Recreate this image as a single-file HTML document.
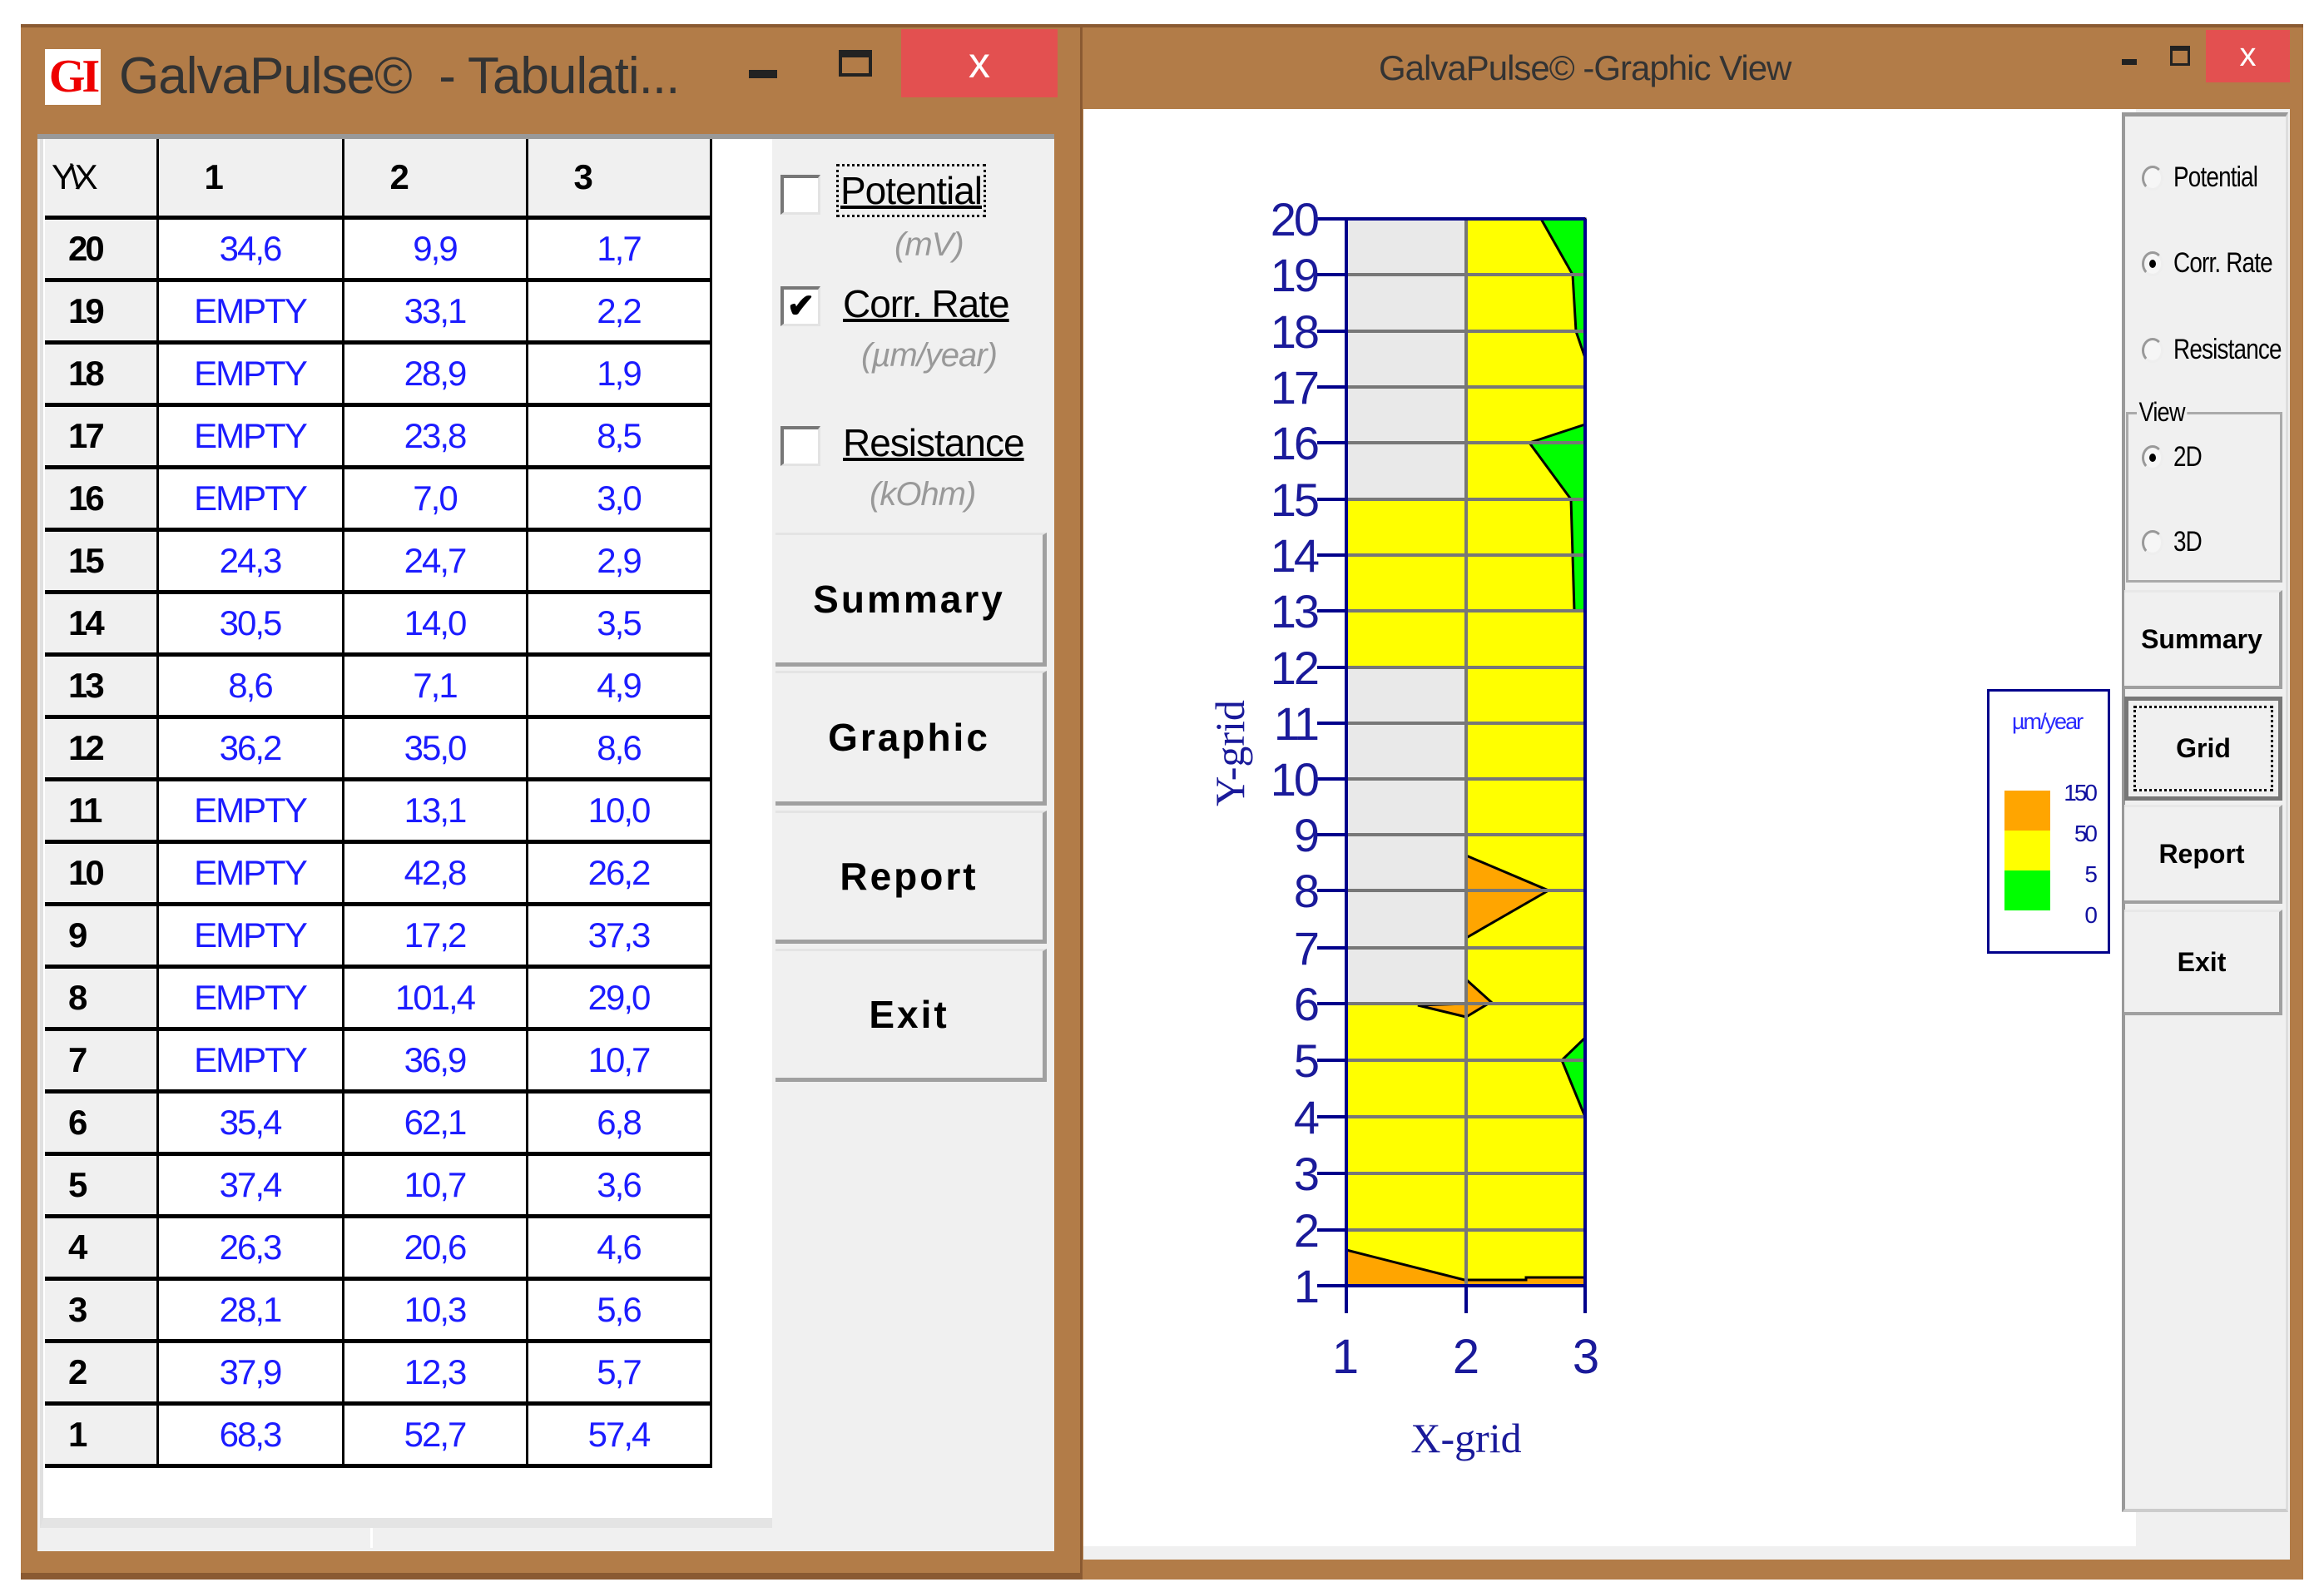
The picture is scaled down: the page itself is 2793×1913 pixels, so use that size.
<!DOCTYPE html>
<html><head><meta charset="utf-8"><style>
*{margin:0;padding:0;box-sizing:border-box}
body{width:2793px;height:1913px;background:#fff;position:relative;overflow:hidden;font-family:"Liberation Sans",sans-serif}
.a{position:absolute}
table{border-collapse:collapse;position:absolute;left:54px;top:167px;table-layout:fixed}
td{height:75px;border-bottom:5px solid #000;border-right:3px solid #000;text-align:center;color:#1c1cff;font-size:42px;letter-spacing:-2px;padding:0}
td.h{background:#f0f0f0;color:#000;text-align:left;padding-left:28px;font-weight:bold;letter-spacing:-3px}
tr.hd td{height:94px;background:#f0f0f0;color:#000;font-weight:bold;text-align:left;padding-left:55px}
tr.hd td:first-child{padding-left:8px;font-weight:normal;letter-spacing:-6px}
.btn{position:absolute;left:932px;width:326px;background:#f0f0f0;border-right:5px solid #a0a0a0;border-bottom:5px solid #a0a0a0;border-top:3px solid #e4e4e4;font-weight:bold;font-size:46px;letter-spacing:3px;display:flex;align-items:center;justify-content:center}
.rb{position:absolute;left:2553px;width:190px;background:#f0f0f0;border-right:4px solid #a0a0a0;border-bottom:4px solid #a0a0a0;border-top:3px solid #e8e8e8;font-weight:bold;font-size:32px;display:flex;align-items:center;justify-content:center;transform-origin:center}
.cb{position:absolute;left:938px;width:48px;height:48px;background:#fff;border-top:4px solid #777;border-left:4px solid #777;border-right:3px solid #e3e3e3;border-bottom:3px solid #e3e3e3}
.lab{position:absolute;font-size:46px;text-decoration:underline;text-decoration-thickness:4px;letter-spacing:-1px}
.unit{position:absolute;font-size:40px;font-style:italic;color:#999;letter-spacing:-1px}
.rad{position:absolute;left:2574px;width:26px;height:30px;border-radius:50%;border:3px solid #999;border-right-color:#eee;border-bottom-color:#eee;background:#f6f6f6}
.rad.on::after{content:"";position:absolute;left:6px;top:7px;width:8px;height:10px;border-radius:50%;background:#000}
.rt{position:absolute;left:2612px;font-size:34px;letter-spacing:-1px;transform:scaleX(0.82);transform-origin:left center;white-space:nowrap}
</style></head><body>

<!-- LEFT WINDOW -->
<div class="a" style="left:25px;top:29px;width:1273px;height:1869px;background:#b27c48;border-top:4px solid #8a5a32;border-bottom:8px solid #8a5a32"></div>
<div class="a" style="left:54px;top:59px;width:67px;height:67px;background:#fff;color:#e00;font-weight:bold;font-size:56px;line-height:67px;text-align:center;font-family:'Liberation Serif',serif;letter-spacing:-4px">GI</div>
<div class="a" style="left:143px;top:56px;font-size:62px;color:#333;letter-spacing:-1px;white-space:nowrap">GalvaPulse©&nbsp; - Tabulati...</div>
<div class="a" style="left:900px;top:84px;width:34px;height:10px;background:#222"></div>
<div class="a" style="left:1008px;top:60px;width:40px;height:32px;border:4px solid #222;border-top-width:9px"></div>
<div class="a" style="left:1083px;top:35px;width:188px;height:82px;background:#e35050;color:#fff;font-size:52px;text-align:center;line-height:82px">x</div>

<div class="a" style="left:45px;top:161px;width:1222px;height:1703px;background:#f0f0f0;border-top:6px solid #999"></div>
<div class="a" style="left:48px;top:167px;width:880px;height:1669px;background:#fff;border-left:4px solid #e0e0e0;border-bottom:12px solid #e4e4e4"></div>
<div class="a" style="left:48px;top:1836px;width:400px;height:24px;background:#f0f0f0;border-right:3px solid #fff"></div>

<table>
<colgroup><col style="width:135px"><col style="width:223px"><col style="width:221px"><col style="width:221px"></colgroup>
<tr class="hd"><td>Y\X</td><td>1</td><td>2</td><td>3</td></tr>
<tr><td class="h">20</td><td>34,6</td><td>9,9</td><td>1,7</td></tr>
<tr><td class="h">19</td><td>EMPTY</td><td>33,1</td><td>2,2</td></tr>
<tr><td class="h">18</td><td>EMPTY</td><td>28,9</td><td>1,9</td></tr>
<tr><td class="h">17</td><td>EMPTY</td><td>23,8</td><td>8,5</td></tr>
<tr><td class="h">16</td><td>EMPTY</td><td>7,0</td><td>3,0</td></tr>
<tr><td class="h">15</td><td>24,3</td><td>24,7</td><td>2,9</td></tr>
<tr><td class="h">14</td><td>30,5</td><td>14,0</td><td>3,5</td></tr>
<tr><td class="h">13</td><td>8,6</td><td>7,1</td><td>4,9</td></tr>
<tr><td class="h">12</td><td>36,2</td><td>35,0</td><td>8,6</td></tr>
<tr><td class="h">11</td><td>EMPTY</td><td>13,1</td><td>10,0</td></tr>
<tr><td class="h">10</td><td>EMPTY</td><td>42,8</td><td>26,2</td></tr>
<tr><td class="h">9</td><td>EMPTY</td><td>17,2</td><td>37,3</td></tr>
<tr><td class="h">8</td><td>EMPTY</td><td>101,4</td><td>29,0</td></tr>
<tr><td class="h">7</td><td>EMPTY</td><td>36,9</td><td>10,7</td></tr>
<tr><td class="h">6</td><td>35,4</td><td>62,1</td><td>6,8</td></tr>
<tr><td class="h">5</td><td>37,4</td><td>10,7</td><td>3,6</td></tr>
<tr><td class="h">4</td><td>26,3</td><td>20,6</td><td>4,6</td></tr>
<tr><td class="h">3</td><td>28,1</td><td>10,3</td><td>5,6</td></tr>
<tr><td class="h">2</td><td>37,9</td><td>12,3</td><td>5,7</td></tr>
<tr><td class="h">1</td><td>68,3</td><td>52,7</td><td>57,4</td></tr>
</table>

<div class="cb" style="top:210px"></div>
<div class="lab" style="left:1010px;top:202px;outline:3px dotted #000;outline-offset:2px">Potential</div>
<div class="unit" style="left:1075px;top:272px">(mV)</div>
<div class="cb" style="top:344px;font-size:40px;line-height:40px;font-weight:bold;text-align:center">✔</div>
<div class="lab" style="left:1013px;top:338px">Corr. Rate</div>
<div class="unit" style="left:1035px;top:405px">(µm/year)</div>
<div class="cb" style="top:512px"></div>
<div class="lab" style="left:1013px;top:505px">Resistance</div>
<div class="unit" style="left:1045px;top:572px">(kOhm)</div>

<div class="btn" style="top:640px;height:161px">Summary</div>
<div class="btn" style="top:806px;height:162px">Graphic</div>
<div class="btn" style="top:974px;height:160px">Report</div>
<div class="btn" style="top:1140px;height:160px">Exit</div>

<!-- RIGHT WINDOW -->
<div class="a" style="left:1298px;top:29px;width:1470px;height:1869px;background:#b27c48;border-top:4px solid #8a5a32;border-left:3px solid #8a5a32"></div>
<div class="a" style="left:1657px;top:58px;font-size:42px;color:#333;letter-spacing:-1px;white-space:nowrap">GalvaPulse© -Graphic View</div>
<div class="a" style="left:2550px;top:71px;width:18px;height:7px;background:#222"></div>
<div class="a" style="left:2608px;top:55px;width:24px;height:24px;border:3px solid #222;border-top-width:6px"></div>
<div class="a" style="left:2651px;top:36px;width:101px;height:63px;background:#e35050;color:#fff;font-size:40px;text-align:center;line-height:60px">x</div>

<div class="a" style="left:1302px;top:131px;width:1450px;height:1743px;background:#f0f0f0"></div>
<div class="a" style="left:1302px;top:131px;width:1265px;height:1727px;background:#fff"></div>
<div class="a" style="left:2550px;top:135px;width:200px;height:1682px;background:#f0f0f0;border-left:4px solid #999;border-top:5px solid #999;border-right:3px solid #ddd;border-bottom:4px solid #ccc"></div>

<div class="rad" style="top:199px"></div><div class="rt" style="top:194px">Potential</div>
<div class="rad on" style="top:302px"></div><div class="rt" style="top:297px">Corr. Rate</div>
<div class="rad" style="top:406px"></div><div class="rt" style="top:401px">Resistance</div>
<div class="a" style="left:2555px;top:495px;width:188px;height:205px;border:3px solid #aaa"></div>
<div class="a" style="left:2568px;top:477px;font-size:32px;background:#f0f0f0;padding:0 3px;letter-spacing:-1px;transform:scaleX(0.85);transform-origin:left center">View</div>
<div class="rad on" style="top:535px"></div><div class="rt" style="top:530px">2D</div>
<div class="rad" style="top:637px"></div><div class="rt" style="top:632px">3D</div>

<div class="rb" style="top:709px;height:119px">Summary</div>
<div class="rb" style="top:837px;height:125px;border:5px solid #777"><div style="position:absolute;inset:6px;border:3px dotted #000"></div>Grid</div>
<div class="rb" style="top:967px;height:119px">Report</div>
<div class="rb" style="top:1093px;height:127px">Exit</div>

<!-- legend -->
<div class="a" style="left:2388px;top:828px;width:148px;height:318px;border:3px solid #00008b;background:#fff"></div>
<div class="a" style="left:2418px;top:852px;font-size:27px;color:#2a2aff;letter-spacing:-2px">µm/year</div>
<div class="a" style="left:2409px;top:950px;width:55px;height:48px;background:#ffa500"></div>
<div class="a" style="left:2409px;top:998px;width:55px;height:48px;background:#ffff00"></div>
<div class="a" style="left:2409px;top:1046px;width:55px;height:48px;background:#00ff00"></div>
<div class="a" style="left:2470px;top:928px;width:48px;text-align:right;font-size:28px;color:#1010a0;letter-spacing:-3px;line-height:49px">150<br>50<br>5<br>0</div>

<svg class="a" style="left:0;top:0" width="2793" height="1913">
<g>
<rect x="1618" y="263" width="144" height="1282" fill="#ffff00"/>
<rect x="1762" y="263" width="143" height="1282" fill="#ffff00"/>
<rect x="1618" y="263" width="144" height="337" fill="#e9e9e9"/>
<rect x="1618" y="802" width="144" height="404" fill="#e9e9e9"/>
<polygon points="1852,263 1905,263 1905,430 1894,398 1890,330" fill="#00ff00" stroke="#000" stroke-width="3"/>
<polygon points="1905,510 1838,532 1888,600 1892,734 1905,734" fill="#00ff00" stroke="#000" stroke-width="3"/>
<polygon points="1905,1247 1877,1274 1905,1342" fill="#00ff00" stroke="#000" stroke-width="3"/>
<polygon points="1762,1028 1861,1070 1762,1127" fill="#ffa500" stroke="#000" stroke-width="3"/>
<polygon points="1762,1177 1792,1204 1762,1222 1704,1208 1762,1206" fill="#ffa500" stroke="#000" stroke-width="3"/>
<polygon points="1618,1502 1760,1538 1834,1538 1834,1535 1905,1535 1905,1545 1618,1545" fill="#ffa500" stroke="#000" stroke-width="3"/>
</g>
<g stroke="#777" stroke-width="4">
<line x1="1618" y1="330" x2="1905" y2="330"/><line x1="1618" y1="398" x2="1905" y2="398"/><line x1="1618" y1="465" x2="1905" y2="465"/><line x1="1618" y1="532" x2="1905" y2="532"/><line x1="1618" y1="600" x2="1905" y2="600"/><line x1="1618" y1="667" x2="1905" y2="667"/><line x1="1618" y1="734" x2="1905" y2="734"/><line x1="1618" y1="802" x2="1905" y2="802"/><line x1="1618" y1="869" x2="1905" y2="869"/><line x1="1618" y1="936" x2="1905" y2="936"/><line x1="1618" y1="1003" x2="1905" y2="1003"/><line x1="1618" y1="1070" x2="1905" y2="1070"/><line x1="1618" y1="1139" x2="1905" y2="1139"/><line x1="1618" y1="1206" x2="1905" y2="1206"/><line x1="1618" y1="1274" x2="1905" y2="1274"/><line x1="1618" y1="1342" x2="1905" y2="1342"/><line x1="1618" y1="1410" x2="1905" y2="1410"/><line x1="1618" y1="1478" x2="1905" y2="1478"/>
<line x1="1762" y1="263" x2="1762" y2="1545"/>
</g>
<g stroke="#00008b" stroke-width="4">
<line x1="1618" y1="263" x2="1618" y2="1578"/><line x1="1762" y1="1545" x2="1762" y2="1578"/><line x1="1905" y1="263" x2="1905" y2="1578"/>
<line x1="1618" y1="263" x2="1905" y2="263"/><line x1="1583" y1="1545" x2="1905" y2="1545"/>
<line x1="1583" y1="263" x2="1618" y2="263"/><line x1="1583" y1="330" x2="1618" y2="330"/><line x1="1583" y1="398" x2="1618" y2="398"/><line x1="1583" y1="465" x2="1618" y2="465"/><line x1="1583" y1="532" x2="1618" y2="532"/><line x1="1583" y1="600" x2="1618" y2="600"/><line x1="1583" y1="667" x2="1618" y2="667"/><line x1="1583" y1="734" x2="1618" y2="734"/><line x1="1583" y1="802" x2="1618" y2="802"/><line x1="1583" y1="869" x2="1618" y2="869"/><line x1="1583" y1="936" x2="1618" y2="936"/><line x1="1583" y1="1003" x2="1618" y2="1003"/><line x1="1583" y1="1070" x2="1618" y2="1070"/><line x1="1583" y1="1139" x2="1618" y2="1139"/><line x1="1583" y1="1206" x2="1618" y2="1206"/><line x1="1583" y1="1274" x2="1618" y2="1274"/><line x1="1583" y1="1342" x2="1618" y2="1342"/><line x1="1583" y1="1410" x2="1618" y2="1410"/><line x1="1583" y1="1478" x2="1618" y2="1478"/>
</g>
<g fill="#1a1a9a" font-family="Liberation Sans, sans-serif" font-size="56" text-anchor="end" letter-spacing="-3">
<text x="1583" y="283">20</text><text x="1583" y="350">19</text><text x="1583" y="418">18</text><text x="1583" y="485">17</text><text x="1583" y="552">16</text><text x="1583" y="620">15</text><text x="1583" y="687">14</text><text x="1583" y="754">13</text><text x="1583" y="822">12</text><text x="1583" y="889">11</text><text x="1583" y="956">10</text><text x="1583" y="1023">9</text><text x="1583" y="1090">8</text><text x="1583" y="1159">7</text><text x="1583" y="1226">6</text><text x="1583" y="1294">5</text><text x="1583" y="1362">4</text><text x="1583" y="1430">3</text><text x="1583" y="1498">2</text><text x="1583" y="1565">1</text>
</g>
<g fill="#1a1a9a" font-family="Liberation Sans, sans-serif" font-size="58" text-anchor="middle">
<text x="1617" y="1650">1</text><text x="1762" y="1650">2</text><text x="1906" y="1650">3</text>
</g>
<text x="1762" y="1745" fill="#1a1a9a" font-family="Liberation Serif, serif" font-size="50" text-anchor="middle">X-grid</text>
<text transform="translate(1495,905) rotate(-90)" fill="#1a1a9a" font-family="Liberation Serif, serif" font-size="50" text-anchor="middle">Y-grid</text>
</svg>
</body></html>
